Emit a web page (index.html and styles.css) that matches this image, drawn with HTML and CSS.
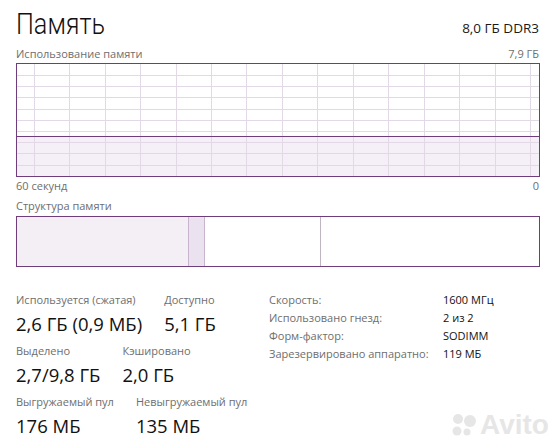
FILE: index.html
```html
<!DOCTYPE html>
<html lang="ru">
<head>
<meta charset="utf-8">
<title>Память</title>
<link rel="stylesheet" href="styles.css">
</head>
<body>
<div class="page">
  <header class="head">
    <h1 class="title">Память</h1>
    <div class="spec">8,0 ГБ DDR3</div>
  </header>
  <div class="caption-row">
    <span>Использование памяти</span>
    <span>7,9 ГБ</span>
  </div>
  <div class="graph">
    <svg class="grid" width="522" height="112" viewBox="0 0 522 112" shape-rendering="crispEdges">
      <rect x="0" y="72" width="522" height="40" fill="#f5eff7"/>
      <g stroke="#e3d8e6" stroke-width="1">
        <line x1="17.5" y1="0" x2="17.5" y2="112"/>
        <line x1="52.5" y1="0" x2="52.5" y2="112"/>
        <line x1="88.5" y1="0" x2="88.5" y2="112"/>
        <line x1="123.5" y1="0" x2="123.5" y2="112"/>
        <line x1="159.5" y1="0" x2="159.5" y2="112"/>
        <line x1="194.5" y1="0" x2="194.5" y2="112"/>
        <line x1="229.5" y1="0" x2="229.5" y2="112"/>
        <line x1="265.5" y1="0" x2="265.5" y2="112"/>
        <line x1="300.5" y1="0" x2="300.5" y2="112"/>
        <line x1="336.5" y1="0" x2="336.5" y2="112"/>
        <line x1="371.5" y1="0" x2="371.5" y2="112"/>
        <line x1="407.5" y1="0" x2="407.5" y2="112"/>
        <line x1="442.5" y1="0" x2="442.5" y2="112"/>
        <line x1="478.5" y1="0" x2="478.5" y2="112"/>
        <line x1="513.5" y1="0" x2="513.5" y2="112"/>
        <line x1="0" y1="11.5" x2="522" y2="11.5"/>
        <line x1="0" y1="22.5" x2="522" y2="22.5"/>
        <line x1="0" y1="33.5" x2="522" y2="33.5"/>
        <line x1="0" y1="45.5" x2="522" y2="45.5"/>
        <line x1="0" y1="56.5" x2="522" y2="56.5"/>
        <line x1="0" y1="67.5" x2="522" y2="67.5"/>
        <line x1="0" y1="78.5" x2="522" y2="78.5"/>
        <line x1="0" y1="89.5" x2="522" y2="89.5"/>
        <line x1="0" y1="101.5" x2="522" y2="101.5"/>
      </g>
      <line x1="0" y1="72.5" x2="522" y2="72.5" stroke="#6f3d7c" stroke-width="1"/>
    </svg>
  </div>
  <div class="caption-row axis">
    <span>60 секунд</span>
    <span>0</span>
  </div>
  <div class="caption-row struct-label">
    <span>Структура памяти</span>
  </div>
  <div class="struct">
    <div class="seg seg-used"></div>
    <div class="seg seg-mod"></div>
    <div class="seg seg-standby"></div>
    <div class="seg seg-free"></div>
  </div>
  <section class="stats">
    <div class="stats-left">
      <div class="stat-row">
        <div class="stat"><div class="label">Используется (сжатая)</div><div class="value">2,6 ГБ (0,9 МБ)</div></div>
        <div class="stat"><div class="label">Доступно</div><div class="value">5,1 ГБ</div></div>
      </div>
      <div class="stat-row">
        <div class="stat"><div class="label">Выделено</div><div class="value">2,7/9,8 ГБ</div></div>
        <div class="stat"><div class="label">Кэшировано</div><div class="value">2,0 ГБ</div></div>
      </div>
      <div class="stat-row">
        <div class="stat"><div class="label">Выгружаемый пул</div><div class="value">176 МБ</div></div>
        <div class="stat"><div class="label">Невыгружаемый пул</div><div class="value">135 МБ</div></div>
      </div>
    </div>
    <dl class="props">
      <dt>Скорость:</dt><dd>1600 МГц</dd>
      <dt>Использовано гнезд:</dt><dd>2 из 2</dd>
      <dt>Форм-фактор:</dt><dd>SODIMM</dd>
      <dt>Зарезервировано аппаратно:</dt><dd>119 МБ</dd>
    </dl>
  </section>
  <div class="watermark" aria-hidden="true">
    <svg width="28" height="26" viewBox="0 0 28 26">
      <circle cx="8" cy="7" r="5" fill="#e6e6e6"/>
      <circle cx="20" cy="9" r="6" fill="#e6e6e6"/>
      <circle cx="7" cy="19" r="4.5" fill="#e6e6e6"/>
      <circle cx="17" cy="20" r="3.5" fill="#e6e6e6"/>
    </svg>
    <span>Avito</span>
  </div>
</div>
</body>
</html>
```
FILE: styles.css
```css
* { box-sizing: border-box; }
html, body { margin: 0; padding: 0; background: #ffffff; }
body {
  font-family: "Open Sans", "Noto Sans", "DejaVu Sans", sans-serif;
  color: #1a1a1a;
}
.page {
  position: relative;
  width: 555px;
  height: 448px;
  padding: 4px 16px 0 16px;
  overflow: hidden;
}
.head {
  display: flex;
  justify-content: space-between;
  align-items: baseline;
  height: 40px;
  width: 523px;
}
.title {
  margin: 0;
  font-family: Roboto, "Open Sans", sans-serif;
  font-size: 29px;
  font-weight: 300;
  line-height: 40px;
  color: #111;
  transform: scaleX(0.87);
  transform-origin: left center;
}
.spec {
  font-size: 13.5px;
  color: #1a1a1a;
  position: relative;
  top: -1px;
}
.caption-row {
  display: flex;
  justify-content: space-between;
  width: 523px;
  font-size: 11px;
  line-height: 19px;
  color: #6e6e6e;
}
.axis { line-height: 18px; }
.struct-label { line-height: 21px; }
.graph {
  width: 524px;
  height: 114px;
  border: 1px solid #6f3d7c;
  background: #fff;
}
.grid { display: block; }
.struct {
  display: flex;
  width: 524px;
  height: 51px;
  border: 1px solid #6f3d7c;
}
.seg { height: 100%; }
.seg-used { width: 172px; background: #f3eff5; border-right: 1px solid #c8b4cf; }
.seg-mod { width: 16px; background: #ebe2ef; border-right: 1px solid #c8b4cf; }
.seg-standby { width: 116px; background: #fff; border-right: 1px solid #bfb5c2; }
.seg-free { flex: 1; background: #fff; }
.stats {
  display: grid;
  grid-template-columns: 253px auto;
  align-items: start;
  margin-top: 24px;
}
.stats-left {
  display: flex;
  flex-direction: column;
  gap: 4px;
}
.stat-row {
  display: flex;
  gap: 22px;
}
.label {
  font-size: 11px;
  line-height: 18px;
  color: #6e6e6e;
  white-space: nowrap;
}
.value {
  font-size: 18.5px;
  line-height: 29px;
  color: #111;
  white-space: nowrap;
}
.props {
  display: grid;
  grid-template-columns: 174px auto;
  align-content: start;
  margin: 0;
  font-size: 11px;
  line-height: 18px;
}
.props dt { color: #6e6e6e; white-space: nowrap; }
.props dd { margin: 0; color: #111; white-space: nowrap; }
.watermark {
  position: absolute;
  left: 450px;
  top: 410px;
  display: flex;
  align-items: center;
  gap: 2px;
  color: #e6e6e6;
  font-family: "Liberation Sans", sans-serif;
  font-weight: bold;
  font-size: 28px;
  line-height: 30px;
}
.watermark svg { display: block; }
```
